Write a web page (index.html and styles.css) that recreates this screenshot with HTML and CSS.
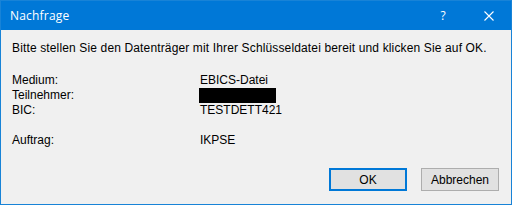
FILE: index.html
```html
<!DOCTYPE html>
<html lang="de">
<head>
<meta charset="utf-8">
<link rel="stylesheet" href="styles.css">
</head>
<body>
<div class="window">
  <div class="titlebar">
    <span class="title">Nachfrage</span>
    <span class="help">?</span>
    <span class="close">
      <svg width="10" height="10" viewBox="0 0 10 10"><path d="M0.5 0.5 L9.5 9.5 M9.5 0.5 L0.5 9.5" stroke="#fff" stroke-width="1.1" fill="none"/></svg>
    </span>
  </div>
  <div class="content">
    <p class="message">Bitte stellen Sie den Datenträger mit Ihrer Schlüsseldatei bereit und klicken Sie auf OK.</p>
    <div class="fields">
      <span class="label">Medium:</span><span class="value">EBICS-Datei</span>
      <span class="label">Teilnehmer:</span><span class="value"><span class="redacted"></span></span>
      <span class="label">BIC:</span><span class="value">TESTDETT421</span>
      <span class="label gap">Auftrag:</span><span class="value gap">IKPSE</span>
    </div>
    <div class="buttons">
      <button class="btn default">OK</button>
      <button class="btn">Abbrechen</button>
    </div>
  </div>
</div>
</body>
</html>
```
FILE: styles.css
```css
html, body {
  margin: 0;
  padding: 0;
}
body {
  width: 512px;
  height: 205px;
  overflow: hidden;
  font-family: "Liberation Sans", Arial, sans-serif;
  font-size: 12px;
  color: #000;
}
.window {
  box-sizing: border-box;
  width: 512px;
  height: 205px;
  border: 1px solid #1883d7;
  background: #f0f0f0;
  display: flex;
  flex-direction: column;
}
.titlebar {
  height: 29px;
  background: #0078d7;
  color: #fff;
  display: flex;
  align-items: center;
  flex-shrink: 0;
}
.title {
  font-family: "Open Sans", "Noto Sans", sans-serif;
  font-size: 12px;
  padding-left: 9px;
  flex: 1;
  letter-spacing: 0.2px;
}
.help {
  font-family: "Open Sans", "Noto Sans", sans-serif;
  font-size: 12px;
  width: 46px;
  text-align: center;
}
.close {
  width: 46px;
  display: flex;
  justify-content: center;
  align-items: center;
  margin-right: -1px;
}
.close svg {
  display: block;
}
.content {
  flex: 1;
  display: flex;
  flex-direction: column;
  padding: 11px 12px 13px 11px;
}
.message {
  margin: 0;
  line-height: 15px;
  white-space: nowrap;
  letter-spacing: 0.14px;
}
.fields {
  margin-top: 17px;
  display: grid;
  grid-template-columns: 188px auto;
  line-height: 15px;
}
.fields .gap {
  margin-top: 15px;
}
.redacted {
  display: inline-block;
  width: 77px;
  height: 15px;
  background: #000;
  vertical-align: top;
  margin-left: -1px;
}
.buttons {
  margin-top: auto;
  display: flex;
  justify-content: flex-end;
  gap: 14px;
}
.btn {
  box-sizing: border-box;
  width: 78px;
  height: 23px;
  font-family: "Liberation Sans", Arial, sans-serif;
  font-size: 12px;
  color: #000;
  background: #e1e1e1;
  border: 1px solid #adadad;
  padding: 0;
  margin: 0;
}
.btn.default {
  border: 2px solid #0078d7;
}
```
